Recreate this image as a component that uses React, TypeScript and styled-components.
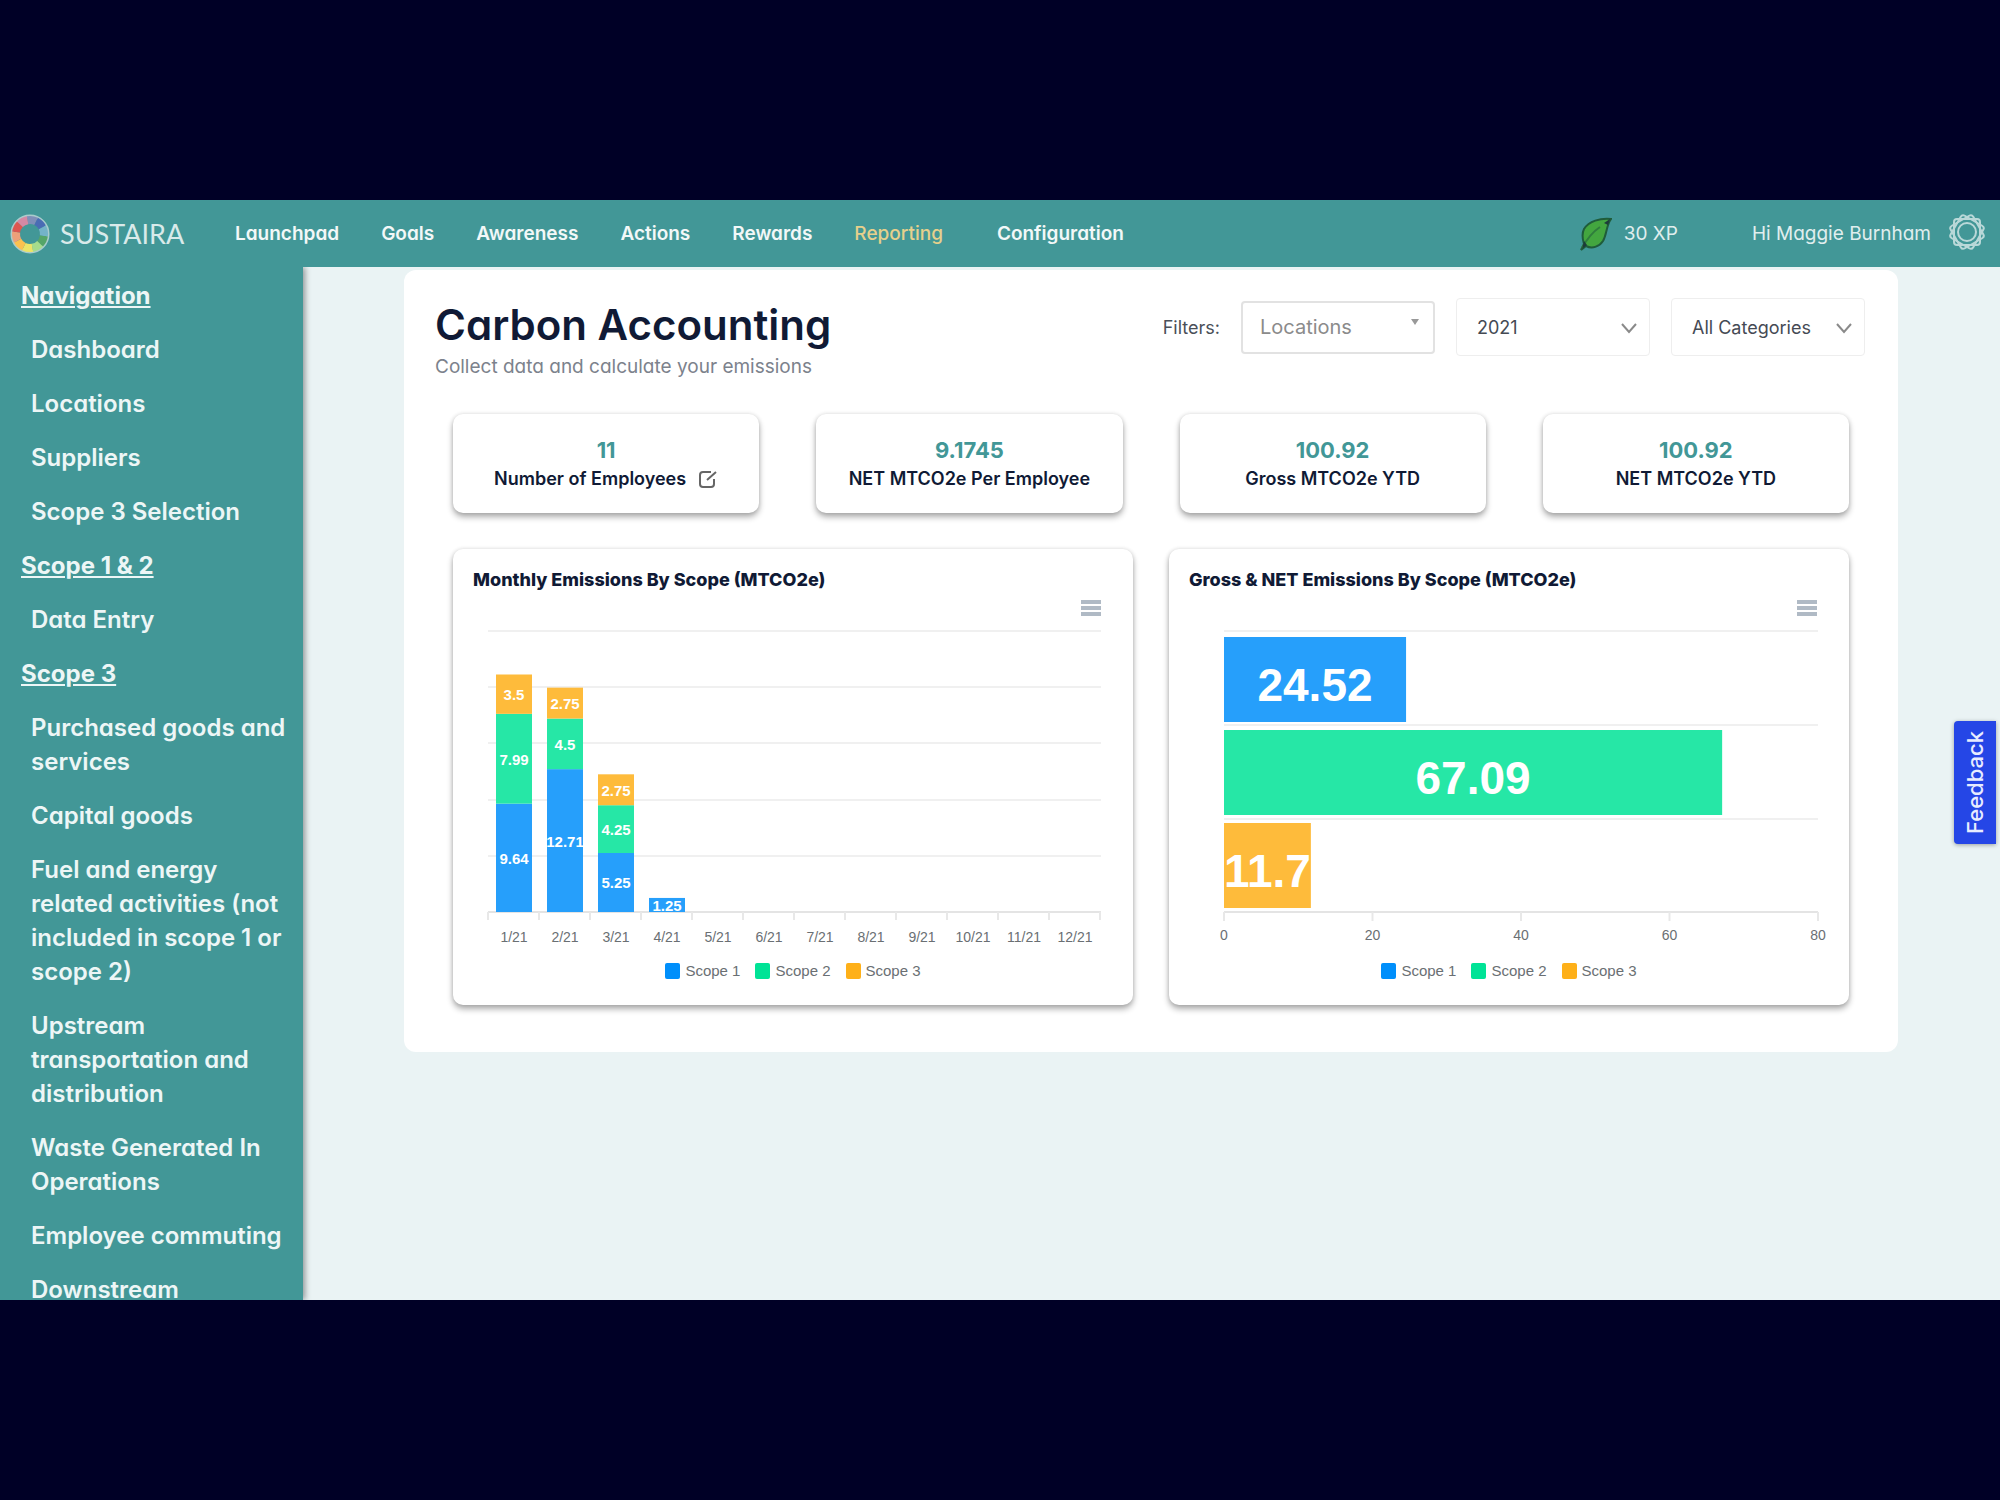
import React from "react";
import styled, { createGlobalStyle, css } from "styled-components";

const teal = "#429797";
const ink = "#101a35";

const Global = createGlobalStyle`
  *, *::before, *::after { box-sizing: border-box; }
  body {
    margin: 0;
    background: #000026;
    color: ${ink};
    font-family: Inter, "Open Sans", sans-serif;
    font-feature-settings: "cv11";
  }
`;

const Stage = styled.div`
  min-height: 100vh;
  display: flex;
  flex-direction: column;
  justify-content: center;
`;

const Shell = styled.div`
  position: relative;
  height: 1100px;
  display: flex;
  flex-direction: column;
  background: #eaf3f4;
  overflow: hidden;
`;

const TopBar = styled.header`
  position: relative;
  z-index: 1;
  flex: none;
  height: 67px;
  padding: 0 14px 0 10px;
  display: flex;
  align-items: center;
  background: ${teal};
  color: #fff;
`;

const Brand = styled.a`
  width: 225px;
  display: flex;
  align-items: center;
  gap: 10px;
  color: #d9eaea;
  font: 400 27px Lato, sans-serif;
  text-decoration: none;
`;

const TopNav = styled.nav`
  display: flex;
  gap: 42px;
`;

const TopLink = styled.a<{ $active?: boolean }>`
  color: ${(p) => (p.$active ? "#e6d08c" : "#f2f8f8")};
  font-size: 19px;
  font-weight: ${(p) => (p.$active ? 500 : 600)};
  text-decoration: none;
  margin-right: ${(p) => (p.$active ? 12 : 0)}px;
`;

const Account = styled.div`
  margin-left: auto;
  display: flex;
  align-items: center;
  font-size: 19px;
  color: #e0eeee;
`;

const Points = styled.span`
  display: flex;
  align-items: center;
  gap: 12px;
  margin-right: 74px;
`;

const ProfileButton = styled.button`
  display: flex;
  align-items: center;
  gap: 17px;
  padding: 0;
  border: 0;
  background: none;
  color: inherit;
  font: inherit;
  svg { margin-bottom: 4px; }
`;

const Body = styled.div`
  flex: 1;
  min-height: 0;
  display: flex;
`;

const Sidebar = styled.nav`
  flex: none;
  width: 303px;
  padding: 12px 0 0 21px;
  display: flex;
  flex-direction: column;
  gap: 20px;
  overflow: hidden;
  background: ${teal};
  box-shadow: 2px 0 6px rgba(0, 0, 0, 0.4);
  font-size: 24px;
  line-height: 34px;
  color: #edf6f6;
`;

const SideHeading = styled.h2`
  flex: none;
  margin: 0;
  font-size: 24px;
  font-weight: 700;
  line-height: 34px;
  text-decoration: underline;
`;

const SideLink = styled.a`
  flex: none;
  padding-left: 10px;
  color: inherit;
  font-weight: 600;
  text-decoration: none;
`;

const Main = styled.main`
  flex: 1;
  min-width: 0;
  padding: 3px 102px 0 101px;
`;

const Panel = styled.section`
  padding: 28px 33px 47px 31px;
  background: #fff;
  border-radius: 12px;
`;

const PanelHead = styled.div`
  display: flex;
  justify-content: space-between;
  align-items: flex-start;
  margin-bottom: 32px;
`;

const Title = styled.h1`
  margin: 0;
  font-size: 42px;
  font-weight: 600;
  line-height: 54px;
`;

const Subtitle = styled.p`
  margin: 0;
  color: #7c828c;
  font-size: 19px;
  line-height: 30px;
`;

const Filters = styled.div`
  display: flex;
  align-items: center;
  gap: 21px;
  height: 58px;
  color: #4a4f58;
  font-size: 18px;
`;

const control = css`
  width: 100%;
  border: 1px solid #eeeeee;
  border-radius: 4px;
  background: #fff;
  font-family: inherit;
  outline: none;
`;

const Field = styled.div`
  position: relative;
  width: 194px;
`;

const LocationInput = styled.input`
  ${control}
  height: 53px;
  padding: 0 17px;
  border: 2px solid #e2e2e2;
  font-size: 20px;
  &::placeholder { color: #8b8b8b; opacity: 1; }
`;

const Select = styled.select`
  ${control}
  height: 58px;
  padding: 0 20px;
  appearance: none;
  color: #454a54;
  font-size: 18px;
`;

const FieldMark = styled.svg<{ $top: number; $right: number }>`
  position: absolute;
  top: ${(p) => p.$top}px;
  right: ${(p) => p.$right}px;
  pointer-events: none;
`;

const raised = css`
  background: #fff;
  border-radius: 10px;
  box-shadow: 0 4px 6px rgba(0, 0, 0, 0.32), 0 0 4px rgba(0, 0, 0, 0.12);
`;

const Stats = styled.div`
  display: grid;
  grid-template-columns: repeat(4, 1fr);
  gap: 57px;
  margin: 0 16px 36px 18px;
`;

const Stat = styled.div`
  ${raised}
  height: 99px;
  display: flex;
  flex-direction: column;
  align-items: center;
  justify-content: center;
`;

const StatValue = styled.strong`
  color: ${teal};
  font-size: 22px;
  font-weight: 700;
  line-height: 30px;
`;

const StatLabel = styled.span`
  display: flex;
  align-items: center;
  gap: 12px;
  font-size: 18px;
  font-weight: 600;
  line-height: 28px;
`;

const EditButton = styled.button`
  display: flex;
  padding: 0;
  border: 0;
  background: none;
  color: #666;
`;

const Charts = styled.div`
  display: grid;
  grid-template-columns: repeat(2, 1fr);
  gap: 36px;
  margin: 0 16px 0 18px;
`;

const ChartCard = styled.section`
  ${raised}
  position: relative;
  padding: 17px 0 8px;
`;

const ChartTitle = styled.h2`
  margin: 0 20px;
  font-size: 18px;
  font-weight: 800;
  line-height: 28px;
`;

const MenuButton = styled.button`
  position: absolute;
  top: 51px;
  right: 32px;
  display: flex;
  flex-direction: column;
  gap: 2px;
  padding: 0;
  border: 0;
  background: none;
  span { width: 20px; height: 4px; background: #b0bac5; }
`;

const Plot = styled.svg`
  display: block;
  width: 100%;
  font-family: "Liberation Sans", Arial, sans-serif;
`;

const Legend = styled.ul`
  display: flex;
  justify-content: center;
  gap: 15px;
  margin: 0;
  padding: 17px 0 16px;
  list-style: none;
  color: #6a6f73;
  font: 15px/20px "Liberation Sans", Arial, sans-serif;
`;

const LegendItem = styled.li<{ $color: string }>`
  display: flex;
  align-items: center;
  gap: 5px;
  &::before {
    content: "";
    width: 15px;
    height: 16px;
    border-radius: 2px;
    background: ${(p) => p.$color};
  }
`;

const Feedback = styled.button`
  position: absolute;
  right: 4px;
  top: 521px;
  width: 42px;
  height: 123px;
  padding: 0;
  border: 0;
  border-radius: 4px 0 0 4px;
  background: #2546e6;
  box-shadow: 0 1px 4px rgba(0, 0, 0, 0.35);
  color: #e8ecff;
  font: 500 22px Inter, sans-serif;
  writing-mode: sideways-lr;
`;

const scopes = [
  { name: "Scope 1", fill: "#269ffb", key: "#008ffb" },
  { name: "Scope 2", fill: "#26e7a6", key: "#00e396" },
  { name: "Scope 3", fill: "#febb3b", key: "#feb019" },
];

const months = [
  [9.64, 7.99, 3.5],
  [12.71, 4.5, 2.75],
  [5.25, 4.25, 2.75],
  [1.25],
];

const totals = [24.52, 67.09, 11.7];

const sideItems: { text: string; heading?: boolean }[] = [
  { text: "Navigation", heading: true },
  { text: "Dashboard" },
  { text: "Locations" },
  { text: "Suppliers" },
  { text: "Scope 3 Selection" },
  { text: "Scope 1 & 2", heading: true },
  { text: "Data Entry" },
  { text: "Scope 3", heading: true },
  { text: "Purchased goods and services" },
  { text: "Capital goods" },
  { text: "Fuel and energy related activities (not included in scope 1 or scope 2)" },
  { text: "Upstream transportation and distribution" },
  { text: "Waste Generated In Operations" },
  { text: "Employee commuting" },
  { text: "Downstream" },
];

const topItems = ["Launchpad", "Goals", "Awareness", "Actions", "Rewards", "Reporting", "Configuration"];

function LogoMark() {
  const colors = ["#7f8fb8", "#4a6cb4", "#74b3c8", "#55a568", "#a6dc8c", "#ece468", "#fbc14f", "#eda07a", "#dd5650", "#d489a4"];
  return (
    <svg width="40" height="42" viewBox="-20 -21 40 42" aria-hidden="true">
      <circle r="18" fill="none" stroke="#a9cccc" strokeWidth="3" />
      {colors.map((c, i) => (
        <circle key={c} r="14" fill="none" stroke={c} strokeWidth="8" strokeDasharray="8.8 79.2" transform={`rotate(${i * 36 - 100})`} />
      ))}
    </svg>
  );
}

function Leaf() {
  return (
    <svg width="32" height="34" viewBox="0 0 32 34" aria-hidden="true">
      <path d="M31 2C20 1 9 4 4 12c-3 6-1 11 0 15l-3 6 5-4c6 3 13 1 17-5 4-7 3-15 8-22Z" fill="#43a63f" stroke="#1f5c3a" strokeWidth="2" />
      <path d="M2 31C8 20 14 14 20 10" fill="none" stroke="#2f7d3c" strokeWidth="2" />
      <path d="M24 6l6-4-2 6zM2 32l2-8 3 4z" fill="#1d3b3a" />
    </svg>
  );
}

function ProfileRing() {
  return (
    <svg width="38" height="40" viewBox="-19 -20 38 40" fill="none" stroke="#b9d8d8" strokeWidth="2" aria-hidden="true">
      <circle r="9" />
      {[0, 30, 60].map((a) => (
        <rect key={a} x="-13" y="-13" width="26" height="26" rx="3" transform={`rotate(${a})`} />
      ))}
    </svg>
  );
}

function MonthlyPlot() {
  const left = 35;
  const step = 51;
  const base = 318;
  const unit = 281 / 25;
  return (
    <Plot viewBox="0 0 680 350" role="img" aria-label="Monthly emissions by scope">
      {[37, 93, 149, 206, 262].map((y) => (
        <line key={y} x1={left} x2={left + 613} y1={y} y2={y} stroke="#f0f0f0" strokeWidth="2" />
      ))}
      <line x1={left} x2={left + 613} y1={base} y2={base} stroke="#e4e4e4" strokeWidth="2" />
      {Array.from({ length: 13 }, (_, i) => (
        <line key={i} x1={left + i * step} x2={left + i * step} y1={base} y2={base + 8} stroke="#e8e8e8" strokeWidth="2" />
      ))}
      {months.map((values, m) => {
        let y = base;
        return values.map((v, s) => {
          const h = v * unit;
          y -= h;
          return (
            <g key={`${m}-${s}`}>
              <rect x={left + 8 + m * step} y={y} width="36" height={h} fill={scopes[s].fill} />
              <text x={left + 26 + m * step} y={y + h / 2 + 6} textAnchor="middle" fontSize="15" fontWeight="700" fill="#fff">{v}</text>
            </g>
          );
        });
      })}
      {Array.from({ length: 12 }, (_, i) => (
        <text key={i} x={left + 26 + i * step} y={base + 30} textAnchor="middle" fontSize="14" fill="#6a6f73">{`${i + 1}/21`}</text>
      ))}
    </Plot>
  );
}

function TotalsPlot() {
  const left = 55;
  const width = 594;
  return (
    <Plot viewBox="0 0 680 350" role="img" aria-label="Gross and NET emissions by scope">
      {[37, 131, 225].map((y) => (
        <line key={y} x1={left} x2={left + width} y1={y} y2={y} stroke="#f0f0f0" strokeWidth="2" />
      ))}
      <line x1={left} x2={left + width} y1="318" y2="318" stroke="#e4e4e4" strokeWidth="2" />
      {[0, 20, 40, 60, 80].map((t) => (
        <g key={t}>
          <line x1={left + (width * t) / 80} x2={left + (width * t) / 80} y1="318" y2="327" stroke="#e8e8e8" strokeWidth="2" />
          <text x={left + (width * t) / 80} y="346" textAnchor="middle" fontSize="14" fill="#6a6f73">{t}</text>
        </g>
      ))}
      {totals.map((v, i) => {
        const w = (width * v) / 80;
        return (
          <g key={v}>
            <rect x={left} y={43 + i * 93} width={w} height="85" fill={scopes[i].fill} />
            <text x={left + w / 2} y={107 + i * 93} textAnchor="middle" fontSize="46" fontWeight="700" fill="#fff">{v}</text>
          </g>
        );
      })}
    </Plot>
  );
}

function Chart({ title, children }: { title: string; children: React.ReactNode }) {
  return (
    <ChartCard>
      <ChartTitle>{title}</ChartTitle>
      <MenuButton aria-label="Chart menu"><span /><span /><span /></MenuButton>
      {children}
      <Legend>
        {scopes.map((s) => <LegendItem key={s.name} $color={s.key}>{s.name}</LegendItem>)}
      </Legend>
    </ChartCard>
  );
}

function Chevron() {
  return (
    <FieldMark $top={24} $right={13} width="16" height="12" viewBox="0 0 16 12" fill="none" stroke="#8a8a8a" strokeWidth="2" aria-hidden="true">
      <path d="M1 2l7 8 7-8" />
    </FieldMark>
  );
}

export default function App() {
  return (
    <Stage>
      <Global />
      <Shell>
        <TopBar>
          <Brand href="#"><LogoMark />SUSTAIRA</Brand>
          <TopNav>
            {topItems.map((t) => <TopLink key={t} href="#" $active={t === "Reporting"}>{t}</TopLink>)}
          </TopNav>
          <Account>
            <Points><Leaf />30 XP</Points>
            <ProfileButton>Hi Maggie Burnham<ProfileRing /></ProfileButton>
          </Account>
        </TopBar>
        <Body>
          <Sidebar>
            {sideItems.map((it) => it.heading
              ? <SideHeading key={it.text}>{it.text}</SideHeading>
              : <SideLink key={it.text} href="#">{it.text}</SideLink>)}
          </Sidebar>
          <Main>
            <Panel>
              <PanelHead>
                <div>
                  <Title>Carbon Accounting</Title>
                  <Subtitle>Collect data and calculate your emissions</Subtitle>
                </div>
                <Filters>
                  <label htmlFor="locations">Filters:</label>
                  <Field>
                    <LocationInput id="locations" placeholder="Locations" />
                    <FieldMark $top={18} $right={16} width="8" height="6" viewBox="0 0 8 6" fill="#999" aria-hidden="true"><path d="M0 0h8L4 6z" /></FieldMark>
                  </Field>
                  <Field>
                    <Select aria-label="Year"><option>2021</option></Select>
                    <Chevron />
                  </Field>
                  <Field>
                    <Select aria-label="Category"><option>All Categories</option></Select>
                    <Chevron />
                  </Field>
                </Filters>
              </PanelHead>
              <Stats>
                <Stat>
                  <StatValue>11</StatValue>
                  <StatLabel>
                    Number of Employees
                    <EditButton aria-label="Edit number of employees">
                      <svg width="20" height="20" viewBox="0 0 20 20" fill="none" stroke="currentColor" strokeWidth="2" aria-hidden="true">
                        <path d="M13 3H5Q2 3 2 6v9q0 3 3 3h8q3 0 3-3v-5M9 11l9-8" />
                      </svg>
                    </EditButton>
                  </StatLabel>
                </Stat>
                <Stat><StatValue>9.1745</StatValue><StatLabel>NET MTCO2e Per Employee</StatLabel></Stat>
                <Stat><StatValue>100.92</StatValue><StatLabel>Gross MTCO2e YTD</StatLabel></Stat>
                <Stat><StatValue>100.92</StatValue><StatLabel>NET MTCO2e YTD</StatLabel></Stat>
              </Stats>
              <Charts>
                <Chart title="Monthly Emissions By Scope (MTCO2e)"><MonthlyPlot /></Chart>
                <Chart title="Gross &amp; NET Emissions By Scope (MTCO2e)"><TotalsPlot /></Chart>
              </Charts>
            </Panel>
          </Main>
        </Body>
        <Feedback>Feedback</Feedback>
      </Shell>
    </Stage>
  );
}
